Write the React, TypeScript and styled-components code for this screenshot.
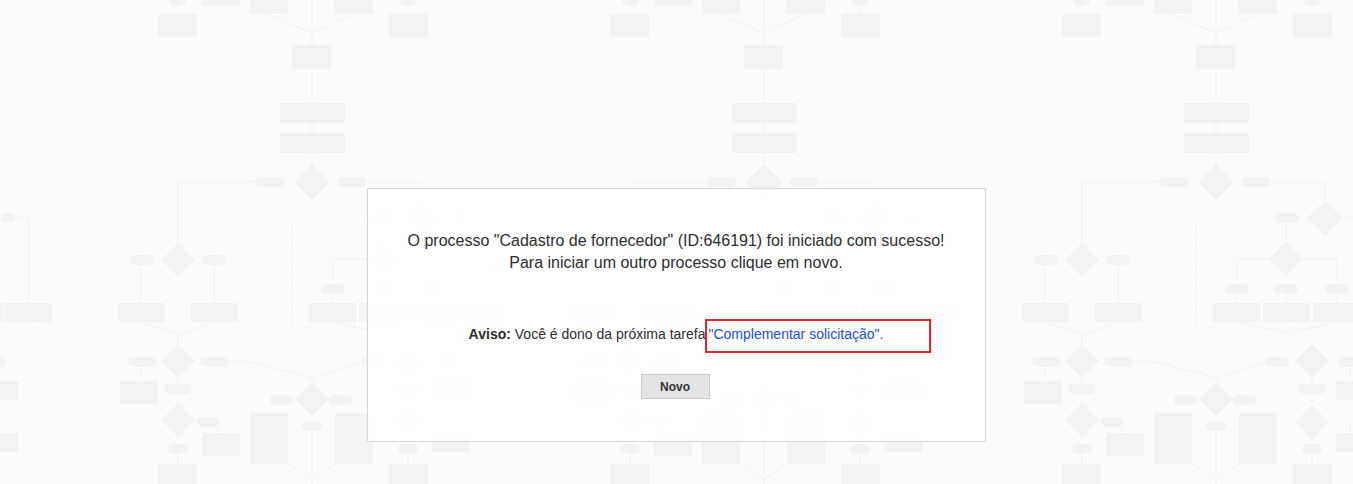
import React from "react"
import styled, { createGlobalStyle } from "styled-components"

const GlobalStyle = createGlobalStyle`
	html, body {
		margin: 0;
		padding: 0;
		height: 100%;
		background: #fcfcfc;
		font-family: Arial, "Liberation Sans", Helvetica, sans-serif;
	}
	#root {
		min-height: 100%;
	}
`

const TILE = 452
const SHAPE = "#f3f3f3"
const LINE = "#f2f2f2"

type Pill = [number, number, number]

const rects: [number, number, number, number][] = [
	[158, 14, 39, 23],
	[202, 0, 38, 6],
	[250, 0, 38, 14],
	[334, 0, 39, 14],
	[292, 45, 39, 24],
	[389, 14, 39, 24],
	[280, 103, 65, 20],
	[280, 133, 65, 20],
	[118, 303, 47, 19],
	[191, 303, 47, 19],
	[120, 381, 38, 23],
	[202, 433, 38, 23],
	[158, 464, 39, 22],
	[250, 413, 38, 51],
	[335, 413, 38, 51],
	[432, 381, 38, 19],
	[389, 464, 39, 22],
	[432, 433, 38, 19],
	[309, 303, 47, 19],
	[359, 303, 47, 19],
	[409, 303, 47, 19],
	[457, 303, 47, 19],
]

// center x, center y, width
const pills: Pill[] = [
	[178, 1, 16],
	[408, 1, 16],
	[270, 182, 29],
	[352, 182, 29],
	[142, 260, 24],
	[214, 260, 24],
	[142, 362, 28],
	[214, 362, 28],
	[178, 389, 28],
	[208, 422, 22],
	[178, 449, 20],
	[282, 400, 24],
	[341, 400, 24],
	[312, 426, 20],
	[373, 362, 24],
	[446, 362, 24],
	[408, 389, 28],
	[408, 449, 20],
	[383, 218, 24],
	[460, 218, 14],
	[333, 289, 24],
	[382, 289, 24],
	[433, 289, 24],
]

const diamonds: [number, number, number][] = [
	[312, 182, 18],
	[178, 260, 17],
	[178, 361, 17],
	[178, 420, 17],
	[312, 399, 17],
	[408, 361, 17],
	[408, 422, 17],
	[421, 218, 18],
	[382, 259, 17],
]

const lines: string[] = [
	"M267 14 L312 33 M354 14 L312 33 M312 0 V45",
	"M178 0 V14 M408 0 V14",
	"M312 69 V103 M312 123 V133 M312 153 V164",
	"M256 182 H178 V243",
	"M367 182 H421 V200",
	"M130 260 H141 V303 M226 260 H214 V303",
	"M141 322 L178 335 M214 322 L178 335 M178 335 V344",
	"M141 367 V381 M178 378 V403 M178 437 V464 M219 422 V433",
	"M228 362 H250 L312 378 M361 362 H360 L312 378 M312 378 V382",
	"M288 464 L312 480 M335 464 L312 480 M312 416 V484",
	"M446 367 V381 M408 378 V403 M408 437 V464 M446 422 V433",
	"M439 218 H481 V303",
	"M382 224 V242",
	"M365 259 H333 V303 M399 259 H433 V303 M382 276 V303",
	"M333 322 L382 333 M433 322 L382 333",
]

function Tile() {
	return (
		<g>
			<g stroke={LINE} strokeWidth={1} fill="none">
				{lines.map((d, i) => (
					<path key={i} d={d} />
				))}
				<path d="M371 218 H292.5 V328 H500" strokeDasharray="3 2" />
			</g>
			<g fill={SHAPE}>
				{rects.map(([x, y, w, h], i) => (
					<rect key={i} x={x} y={y} width={w} height={h} />
				))}
				{pills.map(([cx, cy, w], i) => (
					<rect
						key={i}
						x={cx - w / 2}
						y={cy - 5}
						width={w}
						height={10}
						rx={5}
					/>
				))}
				{diamonds.map(([cx, cy, r], i) => (
					<path
						key={i}
						d={`M${cx} ${cy - r} L${cx + r} ${cy} L${cx} ${cy + r} L${cx - r} ${cy} Z`}
					/>
				))}
			</g>
		</g>
	)
}

function FlowBackground() {
	const offsets = [-TILE, 0, TILE, TILE * 2, TILE * 3]
	return (
		<BackgroundSvg width="1353" height="484" viewBox="0 0 1353 484" aria-hidden>
			{offsets.map((x) => (
				<g key={x} transform={`translate(${x} 0)`}>
					<Tile />
				</g>
			))}
		</BackgroundSvg>
	)
}

export default function App() {
	return (
		<>
			<GlobalStyle />
			<Page>
				<FlowBackground />
				<Card>
					<Message>
						<Line>
							O processo "Cadastro de fornecedor" (ID:646191) foi iniciado com
							sucesso!
						</Line>
						<Line>Para iniciar um outro processo clique em novo.</Line>
					</Message>
					<Notice>
						<strong>Aviso:</strong> Você é dono da próxima tarefa
						<TaskLink href="#">"Complementar solicitação".</TaskLink>
					</Notice>
					<NewButton type="button">Novo</NewButton>
				</Card>
			</Page>
		</>
	)
}

const Page = styled.div`
	position: relative;
	width: 100%;
	height: 484px;
	overflow: hidden;
	display: flex;
	flex-direction: column;
	align-items: center;
	padding-top: 188px;
	box-sizing: border-box;
`

const BackgroundSvg = styled.svg`
	position: absolute;
	top: 0;
	left: 0;
	z-index: 0;
`

const Card = styled.div`
	position: relative;
	z-index: 1;
	box-sizing: border-box;
	width: 619px;
	height: 254px;
	margin-left: -1px;
	background: rgba(255, 255, 255, 0.9);
	border: 1px solid #d6d6d6;
	display: flex;
	flex-direction: column;
	align-items: center;
	padding-top: 41px;
	color: #2e2e2e;
`

const Message = styled.div`
	text-align: center;
	font-size: 16px;
	line-height: 22px;
`

const Line = styled.div``

const Notice = styled.div`
	margin-top: 50px;
	font-size: 14px;
	line-height: 20px;
	color: #2e2e2e;

	strong {
		font-weight: bold;
	}
`

const TaskLink = styled.a`
	position: relative;
	color: #1a4fd6;
	text-decoration: none;
	margin-left: 3px;

	&::after {
		content: "";
		position: absolute;
		left: -3px;
		top: -7px;
		width: 226px;
		height: 34px;
		box-sizing: border-box;
		border: 2px solid #e3262e;
	}
`

const NewButton = styled.button`
	margin-top: 30px;
	margin-left: -2px;
	width: 69px;
	height: 25px;
	box-sizing: border-box;
	background: #e4e4e4;
	border: 1px solid #c9c9c9;
	border-radius: 0;
	font-family: Arial, "Liberation Sans", sans-serif;
	font-size: 12px;
	font-weight: bold;
	color: #333333;
	padding: 0;
	cursor: pointer;
`
